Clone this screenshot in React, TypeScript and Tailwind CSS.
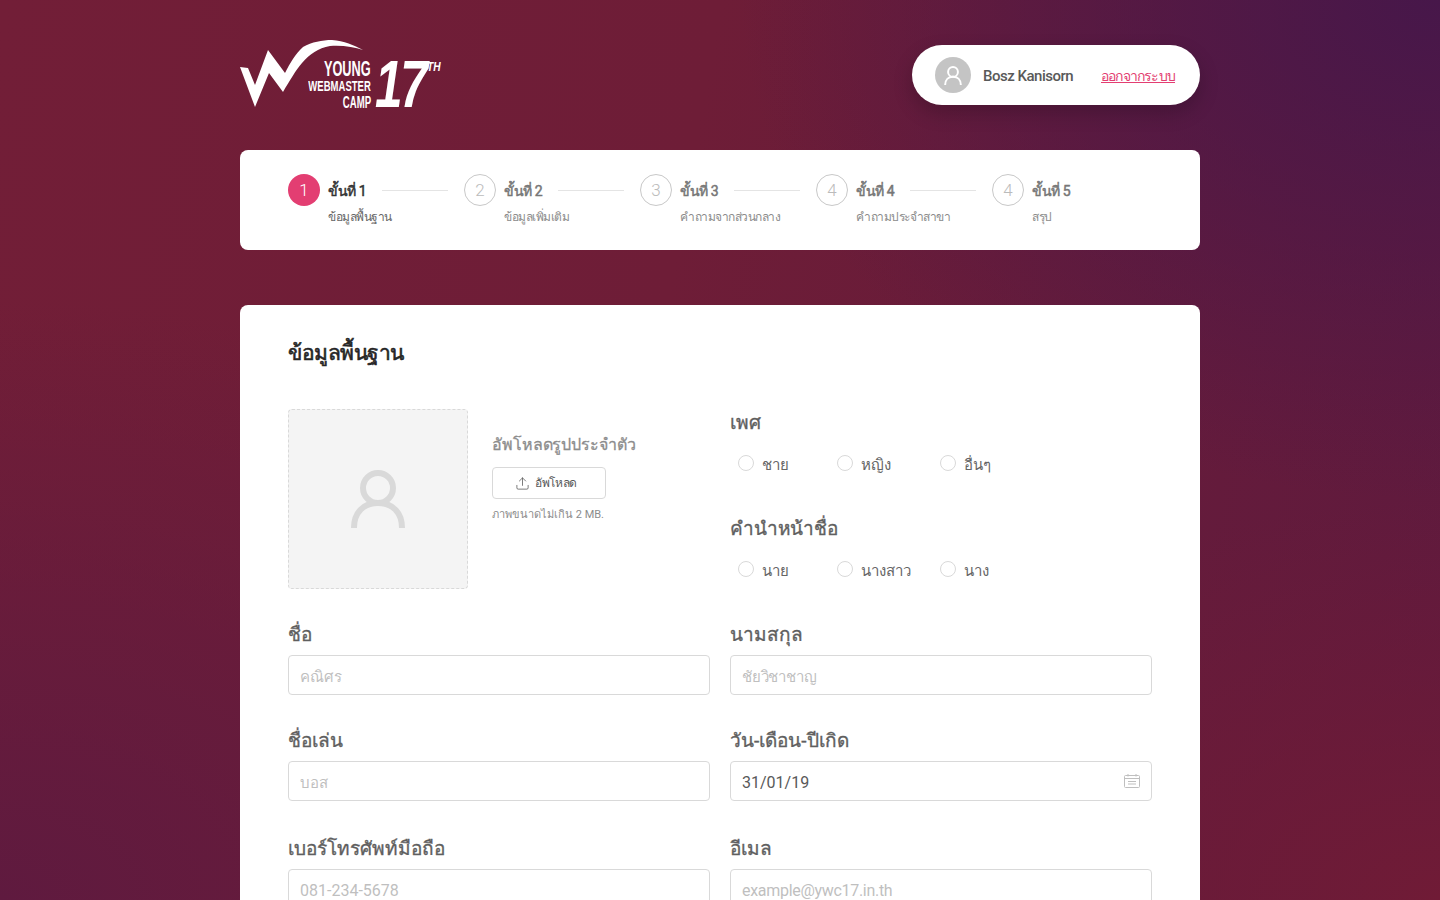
import { Upload } from 'lucide-react'

const steps = [
  { title: 'ขั้นที่ 1', sub: 'ข้อมูลพื้นฐาน', no: 1 },
  { title: 'ขั้นที่ 2', sub: 'ข้อมูลเพิ่มเติม', no: 2 },
  { title: 'ขั้นที่ 3', sub: 'คำถามจากส่วนกลาง', no: 3 },
  { title: 'ขั้นที่ 4', sub: 'คำถามประจำสาขา', no: 4 },
  { title: 'ขั้นที่ 5', sub: 'สรุป', no: 4 },
]

function UserGlyph({ className }: { className: string }) {
  return (
    <svg viewBox="0 0 54 58" fill="none" stroke="currentColor" strokeWidth="6" className={className}>
      <circle cx="27" cy="18" r="15" />
      <path d="M3 58c0-16 10-25 24-25s24 9 24 25" />
    </svg>
  )
}

function Logo() {
  return (
    <div className="relative w-[200px] h-[70px] text-white font-['Liberation_Sans',sans-serif]">
      <svg viewBox="0 0 200 70" className="absolute inset-0 w-[200px] h-[70px]">
        <path d="M0 27 L15 67 L29 33 L43 52 C50 40 56 30 62 23 C70 14 78 8 90 6 C102 5 114 7 123 10 C114 5 104 1 92 0 C82 0 72 2 63 7 C56 13 50 23 45 33 L28 10 L15 45 L8 28 Z" fill="#fff" />
      </svg>
      <div className="absolute right-[69px] top-[18px] text-[22px] leading-[22px] font-bold origin-right scale-x-[0.58]">YOUNG</div>
      <div className="absolute right-[69px] top-[39px] text-[14px] leading-[14px] font-bold origin-right scale-x-[0.68]">WEBMASTER</div>
      <div className="absolute right-[69px] top-[55px] text-[16px] leading-[15px] font-bold origin-right scale-x-[0.6]">CAMP</div>
      <div className="absolute left-[135px] top-[11px] text-[66px] leading-[66px] font-bold italic tracking-[-3px] origin-left scale-x-[0.75]">17</div>
      <div className="absolute left-[187px] top-[21px] text-[12px] leading-[12px] font-bold italic origin-left scale-x-[0.85]">TH</div>
    </div>
  )
}

function Step({ title, sub, no, active, last }: { title: string; sub: string; no: number; active: boolean; last: boolean }) {
  return (
    <div className="flex w-[176px] gap-2">
      {active ? (
        <div className="w-8 h-8 pt-[1px] rounded-full bg-[#e33e72] text-white flex items-center justify-center text-[17px] font-light shrink-0">{no}</div>
      ) : (
        <div className="w-8 h-8 pt-[1px] rounded-full border border-[#c8c8c8] text-[#bbbbbb] flex items-center justify-center text-[17px] font-light shrink-0">{no}</div>
      )}
      <div className="flex-1 min-w-0">
        <div className="flex items-center h-8 pr-4">
          {active ? (
            <span className="text-[14px] pt-[2px] tracking-[-0.4px] whitespace-nowrap text-[#333333] [-webkit-text-stroke:0.5px_#333333]">{title}</span>
          ) : (
            <span className="text-[14px] pt-[2px] tracking-[-0.4px] whitespace-nowrap text-[#777777] [-webkit-text-stroke:0.5px_#777777]">{title}</span>
          )}
          {!last && <div className="flex-1 h-px bg-[#e4e4e4] ml-4" />}
        </div>
        <div className={`text-[12px] tracking-[-0.5px] leading-[20px] mt-[1px] whitespace-nowrap ${active ? 'text-[#666666]' : 'text-[#8c8c8c]'}`}>{sub}</div>
      </div>
    </div>
  )
}

function Radio({ label, width }: { label: string; width: string }) {
  return (
    <label className={`flex items-center gap-2 ${width}`}>
      <span className="w-4 h-4 mb-[2px] rounded-full border border-[#d9d9d9] bg-white shrink-0" />
      <span className="text-[15px] pt-[2px] leading-6 text-[#666666] whitespace-nowrap">{label}</span>
    </label>
  )
}

function RadioGroup({ title, options }: { title: string; options: string[] }) {
  return (
    <div className="h-[106px]">
      <div className="text-[19px] leading-7 tracking-[-0.2px] text-[#5f5f5f] [-webkit-text-stroke:0.35px_#5f5f5f]">{title}</div>
      <div className="flex pl-2 mt-[14px]">
        <Radio label={options[0]} width="w-[99px]" />
        <Radio label={options[1]} width="w-[103px]" />
        <Radio label={options[2]} width="w-[100px]" />
      </div>
    </div>
  )
}

function Field({
  label,
  placeholder,
  value,
  calendar,
  rowHeight = 'h-[106px]',
  textClass = 'text-[16px]',
}: {
  label: string
  placeholder?: string
  value?: string
  calendar?: boolean
  rowHeight?: string
  textClass?: string
}) {
  return (
    <div className={rowHeight}>
      <div className="text-[19px] leading-7 text-[#5f5f5f] [-webkit-text-stroke:0.35px_#5f5f5f] h-8">{label}</div>
      <div className="h-10 mt-[2px] rounded border border-[#d9d9d9] px-[11px] flex items-center justify-between bg-white">
        <span className={`pt-[4px] ${textClass} ${value ? 'text-[#595959]' : 'text-[#bfbfbf]'}`}>{value ?? placeholder}</span>
        {calendar && (
          <svg viewBox="0 0 16 14" fill="none" stroke="#bfbfbf" className="w-4 h-[14px]">
            <rect x="0.5" y="1.5" width="15" height="12" rx="1" />
            <path d="M0.5 4.5h15M4 0v2.5M12 0v2.5M4 7.5h8M4 10h8" />
          </svg>
        )}
      </div>
    </div>
  )
}

export default function App() {
  return (
    <div className="h-[900px] overflow-hidden bg-[#661b3b] bg-[radial-gradient(700px_500px_at_100%_0%,#47174a_0%,#47174a00_100%),radial-gradient(600px_400px_at_100%_100%,#701b36_0%,#701b3600_100%),radial-gradient(900px_600px_at_0%_100%,#5f1a3f_0%,#5f1a3f00_100%),linear-gradient(100deg,#721e37_0%,#6e1d37_45%,#5f1a3e_100%)] font-['Roboto','Noto_Sans',sans-serif]">
      <div className="w-[960px] mx-auto">
        {/* Header */}
        <div className="flex items-center justify-between pt-10 h-[150px] pb-10">
          <Logo />
          <div className="w-[288px] h-[60px] rounded-full bg-white shadow-[0_8px_20px_rgba(0,0,0,0.2)] flex items-center pl-[23px]">
            <div className="w-9 h-9 rounded-full bg-[#c4c4c4] flex items-center justify-center text-white">
              <UserGlyph className="w-[18px] h-[19px]" />
            </div>
            <span className="ml-3 text-[15px] pt-[2px] font-medium tracking-[-0.5px] text-[#595959] w-[118px] whitespace-nowrap">Bosz Kanisorn</span>
            <a className="text-[14px] pt-[2px] tracking-[-0.8px] text-[#e33e72] underline whitespace-nowrap">ออกจากระบบ</a>
          </div>
        </div>

        {/* Steps */}
        <div className="h-[100px] rounded-lg bg-white pt-6 pl-12 flex">
          {steps.map((s, i) => (
            <Step key={s.title} {...s} active={i === 0} last={i === 4} />
          ))}
        </div>

        {/* Form */}
        <div className="mt-[55px] rounded-lg bg-white px-12 pt-[30px] pb-12">
          <h1 className="text-[21px] leading-9 tracking-[-0.5px] text-[#262626] [-webkit-text-stroke:0.6px_#262626]">ข้อมูลพื้นฐาน</h1>
          <div className="grid grid-cols-2 gap-x-5 mt-[38px]">
            <div className="flex gap-6 h-[212px]">
              <div className="w-[180px] h-[180px] rounded border border-dashed border-[#d9d9d9] bg-[#f4f4f4] flex items-center justify-center text-[#d9d9d9]">
                <UserGlyph className="w-[54px] h-[58px]" />
              </div>
              <div className="pt-6">
                <div className="text-[16px] leading-6 tracking-[-0.1px] text-[#8c8c8c] [-webkit-text-stroke:0.3px_#8c8c8c] whitespace-nowrap">อัพโหลดรูปประจำตัว</div>
                <button className="mt-[10px] w-[114px] h-8 pr-[6px] rounded border border-[#d9d9d9] flex items-center justify-center gap-[5px] text-[12px] tracking-[-0.3px] text-[#595959]">
                  <Upload size={15} strokeWidth={1.25} />
                  อัพโหลด
                </button>
                <div className="mt-[6px] text-[11px] leading-5 text-[#8c8c8c] whitespace-nowrap">ภาพขนาดไม่เกิน 2 MB.</div>
              </div>
            </div>
            <div>
              <RadioGroup title="เพศ" options={['ชาย', 'หญิง', 'อื่นๆ']} />
              <RadioGroup title="คำนำหน้าชื่อ" options={['นาย', 'นางสาว', 'นาง']} />
            </div>
            <Field label="ชื่อ" placeholder="คณิศร" textClass="text-[15px]" />
            <Field label="นามสกุล" placeholder="ชัยวิชาชาญ" textClass="text-[15px] tracking-[-0.2px]" />
            <Field label="ชื่อเล่น" placeholder="บอส" rowHeight="h-[108px]" textClass="text-[15px]" />
            <Field label="วัน-เดือน-ปีเกิด" value="31/01/19" calendar rowHeight="h-[108px]" />
            <Field label="เบอร์โทรศัพท์มือถือ" placeholder="081-234-5678" />
            <Field label="อีเมล" placeholder="example@ywc17.in.th" textClass="text-[16px] tracking-[-0.3px]" />
          </div>
        </div>
      </div>
    </div>
  )
}
